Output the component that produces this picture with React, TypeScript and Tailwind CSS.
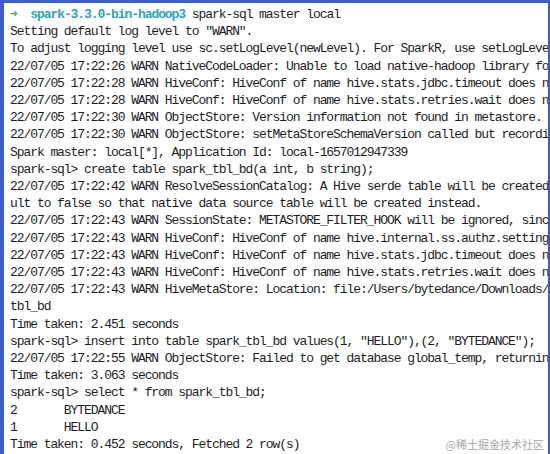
const lines: string[] = [
  "Setting default log level to \"WARN\".",
  "To adjust logging level use sc.setLogLevel(newLevel). For SparkR, use setLogLevel(newLevel).",
  "22/07/05 17:22:26 WARN NativeCodeLoader: Unable to load native-hadoop library for your platform...",
  "22/07/05 17:22:28 WARN HiveConf: HiveConf of name hive.stats.jdbc.timeout does not exist",
  "22/07/05 17:22:28 WARN HiveConf: HiveConf of name hive.stats.retries.wait does not exist",
  "22/07/05 17:22:30 WARN ObjectStore: Version information not found in metastore.",
  "22/07/05 17:22:30 WARN ObjectStore: setMetaStoreSchemaVersion called but recording version is disabled",
  "Spark master: local[*], Application Id: local-1657012947339",
  "spark-sql> create table spark_tbl_bd(a int, b string);",
  "22/07/05 17:22:42 WARN ResolveSessionCatalog: A Hive serde table will be created as there is no table provider",
  "ult to false so that native data source table will be created instead.",
  "22/07/05 17:22:43 WARN SessionState: METASTORE_FILTER_HOOK will be ignored, since hive.security.authorization",
  "22/07/05 17:22:43 WARN HiveConf: HiveConf of name hive.internal.ss.authz.settings.applied.marker does not exist",
  "22/07/05 17:22:43 WARN HiveConf: HiveConf of name hive.stats.jdbc.timeout does not exist",
  "22/07/05 17:22:43 WARN HiveConf: HiveConf of name hive.stats.retries.wait does not exist",
  "22/07/05 17:22:43 WARN HiveMetaStore: Location: file:/Users/bytedance/Downloads/spark-3.3.0-bin-hadoop3/spark-warehouse/spark_",
  "tbl_bd",
  "Time taken: 2.451 seconds",
  "spark-sql> insert into table spark_tbl_bd values(1, \"HELLO\"),(2, \"BYTEDANCE\");",
  "22/07/05 17:22:55 WARN ObjectStore: Failed to get database global_temp, returning NoSuchObjectException",
  "Time taken: 3.063 seconds",
  "spark-sql> select * from spark_tbl_bd;",
  "2       BYTEDANCE",
  "1       HELLO",
  "Time taken: 0.452 seconds, Fetched 2 row(s)",
];

const App = () => {
  return (
    <div className="w-[550px] h-[454px] overflow-hidden bg-[#3d5ccf] pt-[3px] pl-[4px] pr-[2px]">
      <div className="relative h-full bg-white overflow-hidden pl-[6px] pt-[3px] font-['Liberation_Mono',monospace] text-[13px] leading-[17.2px] tracking-[-1.07px] text-[#1e1e1e] whitespace-pre">
        <div>
          <span className="text-[#3fae4a] font-bold">➜  </span>
          <span className="text-[#2ba5b8] font-bold">spark-3.3.0-bin-hadoop3</span>
          <span> spark-sql master local</span>
        </div>
        {lines.map((l, i) => (
          <div key={i}>{l}</div>
        ))}
        <div>
          spark-sql&gt; <span className="inline-block w-[6px] h-[14px] bg-[#8a8a8a] align-middle" />
        </div>
        <div className="absolute right-[4px] bottom-[2px] font-['Noto_Sans_CJK_SC',sans-serif] text-[11px] leading-[16px] tracking-normal text-[#a8a8a8] bg-white">
          @稀土掘金技术社区
        </div>
      </div>
    </div>
  );
};

export default App;
